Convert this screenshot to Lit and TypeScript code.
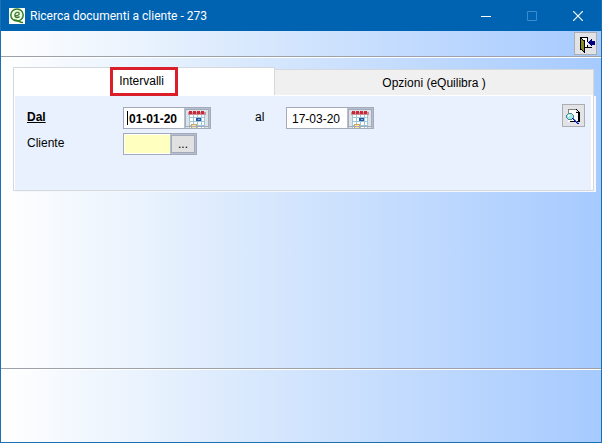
import { LitElement, html, css, svg } from "lit";
import { customElement, property } from "lit/decorators.js";

const logoIcon = html`<svg class="logo" viewBox="0 0 16 16" width="16" height="16" aria-hidden="true">
  <rect width="16" height="16" fill="#fff" />
  <ellipse cx="8" cy="7" rx="6.2" ry="5.9" fill="#f4faee" stroke="#2f8020" stroke-width="1.5" />
  <path d="M5.6 7.6c2.6.5 5-.6 4.6-2.5-.5-1.7-4-.9-4.4 1.7-.4 2.6 2.3 3.5 4.8 1.8" fill="none" stroke="#3f8030" stroke-width="1.3" />
  <path d="M5 12c3-.8 4.5 2.8 9 2.4" fill="none" stroke="#2f8020" stroke-width="1.5" />
</svg>`;

const exitIcon = html`<svg viewBox="-4 -4 21 21" width="21" height="21" shape-rendering="crispEdges" aria-hidden="true">
  <path d="M1 1h7v10H1z" fill="#fff" />
  <path d="M1 0h8v5H8V1H2v2H1zM8 8h1v2h4v1H6v-1h2z" fill="#000" />
  <path d="M1 1h2v1h1v1h2v13H5v-1H4v-1H3v-1H1z" fill="#000" />
  <path d="M2 2h1v1h1v1h1v10H4v-1H3v-1H2z" fill="#8a8a20" />
  <path d="M9 5h1V4h1V3h1V2h1v2h3v4h-3v1h-1V8h-1V7h-1V6H9z" fill="#000080" />
</svg>`;

const previewIcon = html`<svg viewBox="-2 -3 21 21" width="21" height="21" shape-rendering="crispEdges" aria-hidden="true">
  <path d="M3 1h8l3 3v10H3z" fill="#fff" />
  <path d="M3 1h8v1H4v10H3z" fill="#808080" />
  <path d="M11 1h1v1h1v1h1v1h1v10H5v-1h8V5h-2z" fill="#000" />
  <path d="M11 2h1v1h1v1h-2z" fill="#d8d8d8" />
  <path d="M3 5h4v1h1v1h1v3H8v1H7v1H3v-1H2v-1H1V7h1V6h1z" fill="#508888" />
  <path d="M3 6h4v1h1v3H7v1H3v-1H2V7h1z" fill="#9fe8ec" />
  <path d="M3 7h2v1H4v1H3z" fill="#fff" />
  <path d="M7 10h2v1h1v1h1v1h1v1h1v1h1v1h-2v-1h-1v-1h-1v-1H9v-1H8v-1H7z" fill="#0808a0" />
  <path d="M8 10h1v1h1v1h1v1h1v1h1v1h-1v-1h-1v-1h-1v-1H9v-1H8z" fill="#3878e8" />
</svg>`;

const calendarIcon = html`<svg viewBox="0 0 18 17" width="18" height="17" shape-rendering="crispEdges" aria-hidden="true">
  <path d="M1 3h16v14H1z" fill="#fff" />
  <path d="M0 1h18v3H0z" fill="#c89098" />
  ${[1, 5, 9, 13].map((x) => svg`<rect x=${x} y="0" width="3" height="3" fill="#c82838" />`)}
  ${[1, 5, 9, 13, 16].map((x) => svg`<rect x=${x} y="4" width="1" height="13" fill="#a0c4d8" />`)}
  ${[6, 10, 14].map((y) => svg`<rect x="1" y=${y} width="16" height="1" fill="#a0c4d8" />`)}
  <path d="M8 7h5v3H8z" fill="#2858a8" />
  <path d="M10 8h2v1h-2z" fill="#80b0e8" />
  <path d="M3 13h6v4H3z" fill="#c8a860" />
  <path d="M4 14h4v3H4z" fill="#f8e8b8" />
</svg>`;

@customElement("date-field")
export class DateField extends LitElement {
  @property() value = "";
  @property() label = "";
  @property({ type: Boolean, reflect: true }) current = false;

  static styles = css`
    :host { display: block; }
    .field {
      position: relative;
      display: flex;
      box-sizing: border-box;
      width: 88px;
      height: 22px;
      border: 1px solid #a3abba;
      background: #fff;
    }
    input {
      flex: 1;
      min-width: 0;
      box-sizing: border-box;
      border: 0;
      padding: 2px 0 0 5px;
      outline: 0;
      background: transparent;
      color: #000;
      font: 12px "Liberation Sans", Arial, sans-serif;
    }
    :host([current]) input { font-weight: bold; }
    :host([current]) .field::before {
      content: "";
      position: absolute;
      left: 3px;
      top: 3px;
      width: 1px;
      height: 14px;
      background: #000;
    }
    button {
      flex: none;
      display: flex;
      align-items: flex-end;
      justify-content: center;
      box-sizing: border-box;
      width: 26px;
      height: 20px;
      padding: 0;
      border: 2px solid #b4c0cf;
      border-bottom-width: 0;
      outline: 1px solid #a3abba;
      outline-offset: -2px;
      background: #dde3e9;
    }
    svg { display: block; }
  `;

  render() {
    return html`<div class="field">
      <input type="text" aria-label=${this.label} .value=${this.value} />
      <button type="button" aria-label="Calendario">${calendarIcon}</button>
    </div>`;
  }
}

@customElement("app-root")
export class AppRoot extends LitElement {
  static styles = css`
    :host {
      display: flex;
      flex-direction: column;
      box-sizing: border-box;
      min-height: 100vh;
      border: 1px solid #1b6fb3;
      border-top: 0;
      background: linear-gradient(90deg, #fff 0%, #dbeafd 39%, #a6caff 100%);
      color: #000;
      font: 12px "Liberation Sans", Arial, sans-serif;
    }
    button { font: inherit; color: inherit; padding: 0; }
    .titlebar {
      display: flex;
      align-items: center;
      height: 31px;
      padding-left: 8px;
      background: #0063b1;
      color: #fff;
    }
    h1 {
      flex: 1;
      margin: 0 0 0 5px;
      font: 12px Roboto, "Noto Sans", sans-serif;
    }
    .caption {
      display: grid;
      place-items: center;
      width: 46px;
      height: 31px;
      border: 0;
      background: transparent;
    }
    .caption:disabled { color: #3b8bd0; }
    .toolbar {
      display: flex;
      justify-content: flex-end;
      align-items: center;
      height: 25px;
      padding-right: 4px;
    }
    .rule { height: 1px; border-top: 1px solid #9da1aa; background: #fff; }
    .tool {
      display: grid;
      place-items: center;
      box-sizing: border-box;
      width: 23px;
      height: 23px;
      border: 1px solid #abadb3;
      background: #e1e3e6;
    }
    .tool svg { display: block; }
    .body { flex: 1; padding: 9px 5px 0 12px; }
    .tabs { display: flex; align-items: flex-end; margin-right: 2px; }
    .tab {
      display: flex;
      align-items: center;
      justify-content: center;
      box-sizing: border-box;
      border: 1px solid #d5d8dc;
      border-bottom: 0;
    }
    .selected { flex: 45; height: 28px; background: #fff; }
    .other { flex: 55; height: 26px; background: #f0f0f0; border-left: 0; }
    .mark {
      flex: none;
      box-sizing: border-box;
      height: 29px;
      padding: 0 11px 0 6px;
      border: 3px solid #da1f2b;
      line-height: 23px;
    }
    .panel {
      display: flex;
      justify-content: space-between;
      align-items: flex-start;
      box-sizing: border-box;
      min-height: 96px;
      padding: 9px 8px 0 13px;
      margin-right: 2px;
      border: solid #d5d8dc;
      border-width: 0 1px 1px;
      background: #e9f1fe;
      box-shadow: inset 0 1px #fff, inset -2px 0 #fff, inset 1px 0 #fff, 2px 1px #f5f8fd;
    }
    .form {
      display: grid;
      grid-template-columns: 96px 88px 75px 88px;
      grid-auto-rows: 22px;
      row-gap: 4px;
      padding-top: 3px;
    }
    .form label, .to { line-height: 20px; }
    .to { padding-left: 44px; }
    .current { font-weight: bold; text-decoration: underline; }
    .lookup {
      display: flex;
      box-sizing: border-box;
      width: 74px;
      height: 22px;
      border: 1px solid #a3abba;
      background: #fff;
    }
    .lookup input {
      flex: 1;
      min-width: 0;
      margin: 1px;
      margin-right: 0;
      padding: 0 2px;
      border: 0;
      background: #ffffc0;
    }
    .lookup button {
      width: 26px;
      border: 2px solid #b4c0cf;
      outline: 1px solid #a3abba;
      outline-offset: -2px;
      background: #e1e1e1;
      line-height: 14px;
    }
    .footer { height: 72px; }
  `;

  render() {
    return html`
      <header class="titlebar">
        ${logoIcon}
        <h1>Ricerca documenti a cliente - 273</h1>
        <button class="caption" aria-label="Riduci">
          <svg width="10" height="10" aria-hidden="true"><path d="M0 5h10v1H0z" fill="currentColor" /></svg>
        </button>
        <button class="caption" aria-label="Ingrandisci" disabled>
          <svg width="10" height="10" aria-hidden="true"><path d="M.5.5h9v9h-9z" fill="none" stroke="currentColor" /></svg>
        </button>
        <button class="caption" aria-label="Chiudi">
          <svg width="10" height="10" aria-hidden="true"><path d="M0 0l10 10M10 0L0 10" fill="none" stroke="#fff" stroke-width="1.2" /></svg>
        </button>
      </header>
      <div class="toolbar"><button class="tool" aria-label="Esci">${exitIcon}</button></div>
      <div class="rule"></div>
      <main class="body">
        <div class="tabs" role="tablist">
          <button class="tab selected" role="tab" aria-selected="true"><span class="mark">Intervalli</span></button>
          <button class="tab other" role="tab" aria-selected="false">Opzioni (eQuilibra )</button>
        </div>
        <section class="panel" role="tabpanel">
          <div class="form">
            <span class="current"><label>Dal</label></span>
            <date-field label="Dal" value="01-01-20" current></date-field>
            <span class="to">al</span>
            <date-field label="al" value="17-03-20"></date-field>
            <label for="cliente">Cliente</label>
            <div class="lookup">
              <input id="cliente" type="text" />
              <button type="button" aria-label="Cerca cliente">...</button>
            </div>
          </div>
          <button class="tool" aria-label="Anteprima">${previewIcon}</button>
        </section>
      </main>
      <div class="rule"></div>
      <footer class="footer"></footer>
    `;
  }
}
